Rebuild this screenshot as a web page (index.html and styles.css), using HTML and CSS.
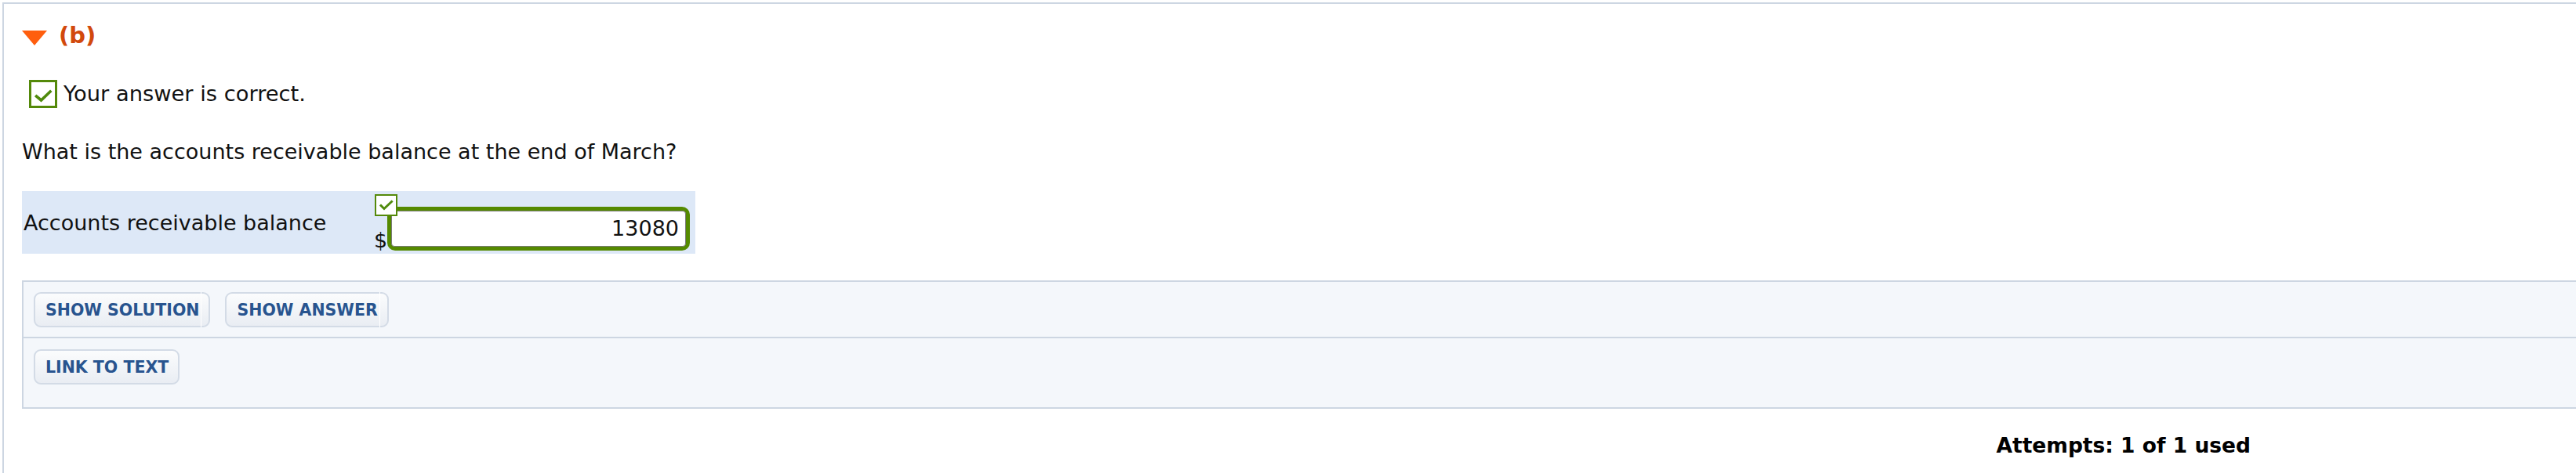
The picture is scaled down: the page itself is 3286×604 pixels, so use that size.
FILE: index.html
```html
<!DOCTYPE html>
<html lang="en">
<head>
<meta charset="utf-8">
<title>Part (b)</title>
<link rel="stylesheet" href="styles.css">
</head>
<body>
<div class="outer">
  <div class="part-header">
    <span class="caret"></span>
    <span class="part-label">(b)</span>
  </div>

  <div class="feedback">
    <span class="check-box">
      <svg width="30" height="30" viewBox="0 0 30 30"><path d="M6.5 18 L12.5 23 L24 12" fill="none" stroke="#4f8a0c" stroke-width="3.6" stroke-linecap="square" stroke-linejoin="miter"/></svg>
    </span>
    <span class="feedback-text">Your answer is correct.</span>
  </div>

  <p class="question">What is the accounts receivable balance at the end of March?</p>

  <div class="answer-row">
    <div class="answer-label">Accounts receivable balance</div>
    <div class="answer-cell">
      <span class="mini-check">
        <svg width="25" height="24" viewBox="0 0 25 24"><path d="M6 12.5 L10 16.5 L19.5 7.5" fill="none" stroke="#4f8a0c" stroke-width="3" stroke-linecap="square"/></svg>
      </span>
      <span class="currency">$</span>
      <div class="field">
        <div class="field-input">13080</div>
      </div>
    </div>
  </div>

  <div class="panel">
    <div class="panel-row first">
      <span class="btn split">SHOW SOLUTION</span>
      <span class="btn split">SHOW ANSWER</span>
    </div>
    <div class="panel-row second">
      <span class="btn">LINK TO TEXT</span>
    </div>
  </div>

  <div class="footer">
    <span class="attempts">Attempts: 1 of 1 used</span>
  </div>
</div>
</body>
</html>
```

FILE: styles.css
```css
html, body {
  margin: 0;
  padding: 0;
  overflow: hidden;
  background: #ffffff;
}

body {
  font-family: "DejaVu Sans", Verdana, sans-serif;
  color: #111111;
}

.outer {
  margin: 3px 0 0 3px;
  width: 3500px;
  height: 700px;
  box-sizing: border-box;
  border-top: 2px solid #cdd6e2;
  border-left: 2px solid #cdd6e2;
  padding: 23px 0 0 23px;
  background: #ffffff;
}

.part-header {
  display: flex;
  align-items: center;
  height: 35px;
}

.caret {
  width: 0;
  height: 0;
  margin-top: 5px;
  border-left: 16.5px solid transparent;
  border-right: 16.5px solid transparent;
  border-top: 19px solid #ff5e0e;
  margin-right: 15px;
}

.part-label {
  font-size: 29px;
  line-height: 35px;
  font-weight: bold;
  color: #d2490c;
}

.feedback {
  display: flex;
  align-items: center;
  margin: 39px 0 0 9px;
}

.check-box {
  width: 30px;
  height: 30px;
  border: 3px solid #54890a;
  background: #ffffff;
  display: flex;
}

.feedback-text {
  font-size: 27.3px;
  line-height: 32px;
  margin-left: 8px;
}

.question {
  margin: 40px 0 0 0;
  font-size: 27px;
  line-height: 32px;
}

.answer-row {
  margin-top: 34px;
  width: max-content;
  padding-right: 7px;
  display: flex;
  align-items: flex-start;
  background: #dde8f7;
}

.answer-label {
  width: 449px;
  flex: none;
  padding: 25px 0 0 2px;
  box-sizing: border-box;
  font-size: 27px;
  line-height: 32px;
}

.answer-cell {
  position: relative;
  display: flex;
  flex: none;
  align-items: flex-end;
  padding: 20px 0 4px 0;
}

.mini-check {
  position: absolute;
  top: 4px;
  left: 1px;
  width: 25px;
  height: 24px;
  border: 2px solid #54890a;
  background: #ffffff;
  display: flex;
  z-index: 2;
}

.currency {
  font-size: 27px;
  line-height: 1;
  width: 17px;
  flex: none;
}

.field {
  width: 376px;
  height: 46px;
  flex: none;
  border: 5px solid #558a00;
  border-radius: 10px;
  background: #558a00;
}

.field-input {
  height: 44px;
  border: 1px solid #7b7b7b;
  border-radius: 4px;
  background: #ffffff;
  font-size: 27px;
  line-height: 44px;
  text-align: right;
  padding-right: 8px;
}

.panel {
  margin-top: 34px;
  border: 2px solid #cdd6e2;
  border-right: none;
  background: #f4f7fb;
}

.panel-row {
  display: flex;
  gap: 19px;
  padding: 13px 0 12px 13px;
}

.panel-row.second {
  border-top: 2px solid #cdd6e2;
  padding: 14px 0 29px 13px;
}

.btn {
  position: relative;
  display: flex;
  align-items: center;
  box-sizing: border-box;
  height: 45px;
  padding: 0 12px 0 13px;
  border: 2px solid #d3dbe6;
  border-radius: 9px;
  background: linear-gradient(#fbfcfd, #e9edf3);
  color: #28548f;
  font-size: 20.5px;
  font-weight: bold;
  white-space: nowrap;
}

.btn.split::after {
  content: "";
  position: absolute;
  top: -2px;
  bottom: -2px;
  right: 9px;
  width: 1px;
  background: #ffffff;
}

.footer {
  width: 2843px;
  display: flex;
  justify-content: flex-end;
  margin-top: 31px;
}

.attempts {
  font-size: 26.5px;
  line-height: 32px;
  font-weight: bold;
  color: #000000;
}
```
